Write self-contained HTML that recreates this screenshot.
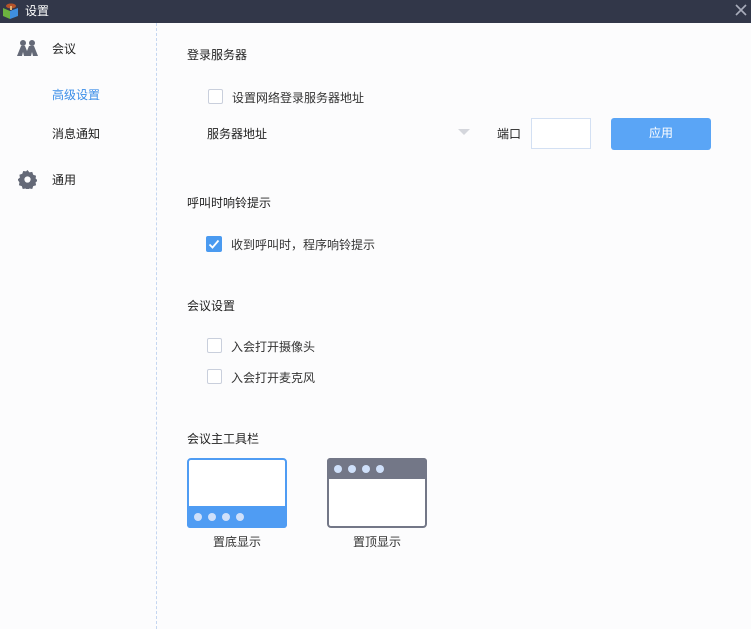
<!DOCTYPE html>
<html><head><meta charset="utf-8"><style>
*{margin:0;padding:0;box-sizing:border-box}
body{width:751px;height:629px;background:#fcfcfd;font-family:"Liberation Sans","Noto Sans CJK SC",sans-serif;font-size:12px;color:#222;position:relative;overflow:hidden}
.a{position:absolute;white-space:nowrap}
.tb{position:absolute;left:0;top:0;width:751px;height:23px;background:#323749}
.cb{position:absolute;width:15px;height:15px;border:1px solid #c9cfdc;border-radius:2px;background:#fff}
</style></head><body>
<div class="tb"></div>
<svg class="a" style="left:2px;top:2px" width="18" height="18" viewBox="0 0 18 18"><path d="M1 6 L8 9 L8 17 L1 14Z" fill="#6cb33f"/><path d="M8 9 L16 6 L16 14 L8 17Z" fill="#3f8fe0"/><ellipse cx="9" cy="4" rx="5" ry="2.5" fill="#b5532a"/><rect x="8" y="4" width="2" height="4" fill="#e0b070"/></svg>
<div class="a" style="left:25px;top:2px;color:#fff;font-size:12px">设置</div>
<svg class="a" style="left:735px;top:4px" width="12" height="12"><path d="M1 1L11 11M11 1L1 11" stroke="#a9adbb" stroke-width="1.6"/></svg>
<div class="a" style="left:156px;top:23px;height:606px;border-left:1px dashed #c5d6f0"></div>
<svg class="a" style="left:17px;top:39px" width="21" height="18" viewBox="0 0 21 18"><circle cx="6" cy="4" r="3" fill="#646977"/><circle cx="15" cy="4" r="3" fill="#646977"/><path d="M0 17 L4 7 L8 7 L10 12 L12 7 L17 7 L21 17 L16 17 L15 13 L14 17 L7 17 L6 13 L5 17Z" fill="#646977"/></svg>
<div class="a" style="left:52px;top:40px">会议</div>
<div class="a" style="left:52px;top:86px;color:#3b8ee8">高级设置</div>
<div class="a" style="left:52px;top:125px">消息通知</div>
<svg class="a" style="left:18px;top:170px" width="19" height="19" viewBox="0 0 20 20"><path d="M10 0l2 2.5 3-.5 1 3 3 1-.5 3 2.5 2-2.5 2 .5 3-3 1-1 3-3-.5-2 2.5-2-2.5-3 .5-1-3-3-1 .5-3L-.5 10 2 8l-.5-3 3-1 1-3 3 .5z" fill="#646977"/><circle cx="10" cy="10" r="3.3" fill="#fcfcfd"/></svg>
<div class="a" style="left:52px;top:171px">通用</div>

<div class="a" style="left:187px;top:46px">登录服务器</div>
<div class="cb" style="left:208px;top:89px"></div>
<div class="a" style="left:232px;top:89px;color:#333">设置网络登录服务器地址</div>
<div class="a" style="left:207px;top:125px">服务器地址</div>
<svg class="a" style="left:458px;top:129px" width="12" height="7"><path d="M0 0H12L6 6Z" fill="#d4d6dc"/></svg>
<div class="a" style="left:497px;top:125px">端口</div>
<div class="a" style="left:531px;top:118px;width:60px;height:31px;border:1px solid #d3e0f3;background:#fff"></div>
<div class="a" style="left:611px;top:118px;width:100px;height:32px;background:#5aa5f6;border-radius:3px;color:#fff;text-align:center;line-height:31px">应用</div>

<div class="a" style="left:187px;top:194px">呼叫时响铃提示</div>
<div class="a" style="left:206px;top:236px;width:16px;height:16px;background:#4a9af0;border-radius:2px"><svg width="16" height="16"><path d="M3.5 8.5L6.5 11.5L12.5 4.5" stroke="#fff" stroke-width="1.8" fill="none"/></svg></div>
<div class="a" style="left:231px;top:236px;color:#333">收到呼叫时，程序响铃提示</div>

<div class="a" style="left:187px;top:297px">会议设置</div>
<div class="cb" style="left:207px;top:338px"></div>
<div class="a" style="left:231px;top:338px;color:#333">入会打开摄像头</div>
<div class="cb" style="left:207px;top:369px"></div>
<div class="a" style="left:231px;top:369px;color:#333">入会打开麦克风</div>

<div class="a" style="left:187px;top:430px">会议主工具栏</div>
<svg class="a" style="left:187px;top:458px" width="100" height="70"><rect x="1" y="1" width="98" height="68" rx="3" fill="#fff" stroke="#4f9cf3" stroke-width="2"/><path d="M0 48H100V67a3 3 0 0 1-3 3H3a3 3 0 0 1-3-3Z" fill="#4f9cf3"/><g fill="#cfe0fa"><circle cx="11" cy="59" r="4"/><circle cx="25" cy="59" r="4"/><circle cx="39" cy="59" r="4"/><circle cx="53" cy="59" r="4"/></g></svg>
<div class="a" style="left:213px;top:533px;color:#333">置底显示</div>
<svg class="a" style="left:327px;top:458px" width="100" height="70"><rect x="1" y="1" width="98" height="68" rx="3" fill="#fff" stroke="#737787" stroke-width="2"/><path d="M3 0H97a3 3 0 0 1 3 3V21H0V3a3 3 0 0 1 3-3Z" fill="#737787"/><g fill="#cfe0fa"><circle cx="11" cy="11" r="4"/><circle cx="25" cy="11" r="4"/><circle cx="39" cy="11" r="4"/><circle cx="53" cy="11" r="4"/></g></svg>
<div class="a" style="left:353px;top:533px;color:#333">置顶显示</div>
</body></html>
